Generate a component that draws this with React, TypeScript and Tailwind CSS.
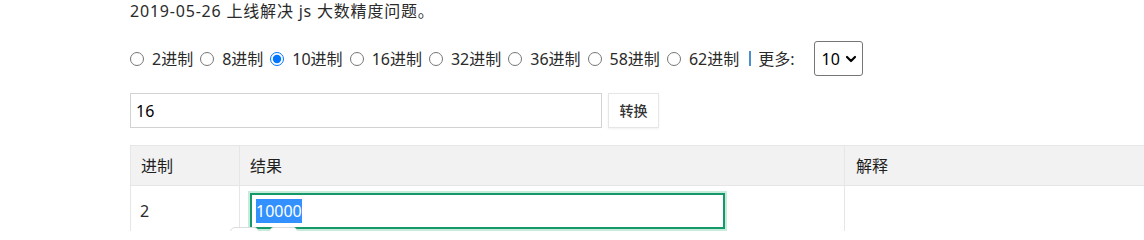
import React from "react";

const radios = ["2进制", "8进制", "10进制", "16进制", "32进制", "36进制", "58进制", "62进制"];

export default function App() {
  return (
    <div
      className="relative w-[1144px] h-[231px] overflow-hidden bg-white text-[#2a2a2a]"
      style={{ fontFamily: "'Noto Sans', 'Noto Sans CJK SC', sans-serif" }}
    >
      <div className="pl-[130px]">
        <div className="h-[22px] leading-[22px] text-[16px] tracking-[0.8px] whitespace-nowrap">
          2019-05-26 上线解决 js 大数精度问题。
        </div>

        <div className="mt-[19px] h-[35px] flex items-center text-[16px] whitespace-nowrap">
          {radios.map((r, i) => (
            <label key={r} className="flex items-center mr-[7px]">
              <input
                type="radio"
                name="base"
                defaultChecked={i === 2}
                className="m-0 w-[14px] h-[14px]"
              />
              <span className="ml-[8px]">{r}</span>
            </label>
          ))}
          <span className="ml-[3px] w-[2px] h-[15px] bg-[#4a90cf]" />
          <span className="ml-[7px]">更多:</span>
          <div className="ml-[20px] w-[49px] h-[35px] border border-[#767676] rounded-[3px] flex items-center pl-[6px] text-black">
            <span>10</span>
            <svg className="ml-[5px]" width="12" height="12" viewBox="0 0 12 12">
              <path d="M2 4 L6 8 L10 4" fill="none" stroke="#000" strokeWidth="2.2" strokeLinecap="round" strokeLinejoin="round" />
            </svg>
          </div>
        </div>

        <div className="mt-[17px] flex items-center h-[35px]">
          <div className="w-[472px] h-[35px] border border-[#d2d2d2] flex items-center pl-[5px] text-[16px] text-black">
            16
          </div>
          <button className="ml-[6px] w-[51px] h-[35px] border border-[#e6e6e6] bg-white text-[14px] font-medium text-[#333] shadow-[0_1px_2px_rgba(0,0,0,0.06)]">
            转换
          </button>
        </div>

        <div className="mt-[17px] w-[1100px] text-[16px]">
          <div className="flex h-[41px] bg-[#f2f2f2] border border-[#e6e6e6] text-[#1f1f1f]">
            <div className="w-[109px] border-r border-[#e6e6e6] flex items-center pl-[10px]">进制</div>
            <div className="w-[605px] border-r border-[#e6e6e6] flex items-center pl-[10px]">结果</div>
            <div className="flex-1 flex items-center pl-[11px]">解释</div>
          </div>
          <div className="flex h-[60px] border-x border-[#e6e6e6]">
            <div className="w-[109px] border-r border-[#e6e6e6] pl-[9px] pt-[13px]">2</div>
            <div className="w-[605px] border-r border-[#e6e6e6] pl-[10px] pt-[7px]">
              <div className="w-[475px] h-[36px] border-2 border-[#15986a] shadow-[0_0_0_2px_#c8ecdc] flex items-center pl-[4px] text-black">
                <span className="bg-[#3390ff] text-white leading-[24px]">10000</span>
              </div>
            </div>
            <div className="flex-1" />
          </div>
        </div>
      </div>

      <div className="absolute left-[230px] top-[227px] w-[29px] h-[10px] bg-white border border-[#dcdcdc] rounded-t-[5px]" />
      <div className="absolute left-[269px] top-[227px] w-[29px] h-[10px] bg-white border border-[#dcdcdc] rounded-t-[5px]" />
    </div>
  );
}
